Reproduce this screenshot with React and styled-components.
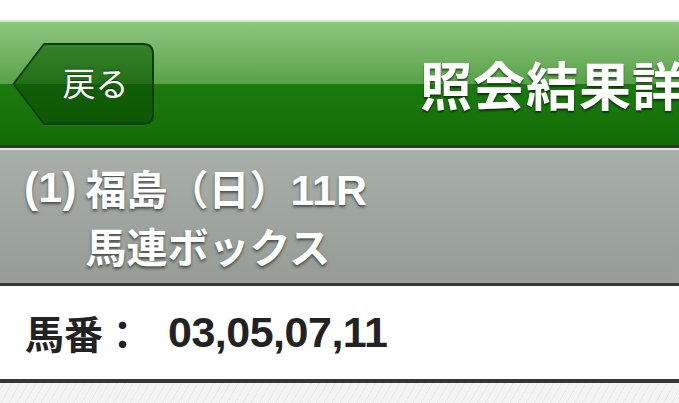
import React from "react";
import styled, { createGlobalStyle } from "styled-components";

const Global = createGlobalStyle`
  html, body { margin: 0; padding: 0; background: #ffffff; }
  body { font-family: "Liberation Sans", "Noto Sans CJK JP", sans-serif; overflow: hidden; }
`;

const Page = styled.div`
  display: flex;
  flex-direction: column;
  width: 679px;
  height: 403px;
  overflow: hidden;
  background: #ffffff;
`;

const TopGap = styled.div`
  height: 20px;
  flex: none;
`;

const Header = styled.header`
  flex: none;
  height: 123px;
  display: flex;
  align-items: center;
  padding-left: 12px;
  border-top: 2px solid #d2ebc9;
  border-bottom: 3px solid #2a3628;
  background: linear-gradient(
    to bottom,
    #8ec67e 0%,
    #74b464 25%,
    #58a248 50%,
    #1b7a0d 50%,
    #17730a 80%,
    #136c07 100%
  );
  overflow: hidden;
`;

const BackButton = styled.button`
  position: relative;
  flex: none;
  width: 143px;
  height: 84px;
  padding: 0 0 0 24px;
  border: 0;
  background: transparent;
  display: flex;
  align-items: center;
  justify-content: center;
  color: #ffffff;
  font-family: "Noto Sans CJK JP", sans-serif;
  font-size: 33px;
  font-weight: 400;
  text-shadow: 0 -1px 1px rgba(0, 0, 0, 0.45);
  cursor: pointer;
`;

const ButtonShape = styled.svg`
  position: absolute;
  inset: 0;
  width: 100%;
  height: 100%;
`;

const ButtonLabel = styled.span`
  position: relative;
  line-height: 1;
  margin-top: -2px;
`;

const Title = styled.h1`
  margin: 0 0 0 265px;
  white-space: nowrap;
  color: #ffffff;
  font-family: "Noto Sans CJK JP", sans-serif;
  font-size: 52px;
  font-weight: 700;
  letter-spacing: 1px;
  line-height: 1;
  text-shadow: 0 2px 2px rgba(0, 0, 0, 0.55);
`;

const RaceBar = styled.section`
  flex: none;
  height: 123px;
  padding: 10px 0 0 24px;
  display: grid;
  grid-template-columns: auto 1fr;
  column-gap: 9px;
  align-content: start;
  border-top: 2px solid #e2e6e2;
  border-bottom: 3px solid #333833;
  background: linear-gradient(to bottom, #a9afa9 0%, #9ea59e 50%, #959d95 100%);
  color: #ffffff;
  font-size: 43px;
  font-weight: 700;
  line-height: 55px;
  text-shadow: 0 2px 3px rgba(0, 0, 0, 0.55);
`;

const RaceNo = styled.div``;

const RaceLines = styled.div`
  display: flex;
  flex-direction: column;
  font-family: "Noto Sans CJK JP", sans-serif;
  font-size: 41px;
`;

const Latin = styled.span`
  font-family: "Liberation Sans", sans-serif;
  font-size: 43px;
`;

const InfoRow = styled.div`
  flex: none;
  height: 93px;
  display: flex;
  align-items: center;
  padding-left: 25px;
  border-bottom: 4px solid #363636;
  background: #ffffff;
  color: #222222;
  font-weight: 700;
`;

const InfoLabel = styled.span`
  font-family: "Noto Sans CJK JP", sans-serif;
  font-size: 39px;
  line-height: 1;
`;

const InfoValue = styled.span`
  margin-left: 26px;
  font-family: "Liberation Sans", sans-serif;
  font-size: 43px;
  line-height: 1;
  letter-spacing: -0.5px;
`;

const Stripes = styled.div`
  flex: 1;
  background: repeating-linear-gradient(
    -60deg,
    #f3f3f3 0px,
    #f3f3f3 6px,
    #e8e8e8 6px,
    #e8e8e8 7px
  );
`;

function ButtonBackground() {
  return (
    <ButtonShape viewBox="0 0 143 84" preserveAspectRatio="none" aria-hidden="true">
      <defs>
        <linearGradient id="btnFill" x1="0" y1="0" x2="0" y2="1">
          <stop offset="0" stopColor="#35832a" />
          <stop offset="0.5" stopColor="#226f18" />
          <stop offset="0.5" stopColor="#115f08" />
          <stop offset="1" stopColor="#0d5705" />
        </linearGradient>
      </defs>
      <path
        d="M1.5 42 L32 2 H131 Q141 2 141 12 V72 Q141 82 131 82 H32 Z"
        fill="#3f9233"
        transform="translate(0 1.2)"
      />
      <path
        d="M1.5 42 L32 2 H131 Q141 2 141 12 V72 Q141 82 131 82 H32 Z"
        fill="url(#btnFill)"
        stroke="#0a3d04"
        strokeWidth="2"
        strokeLinejoin="round"
      />
    </ButtonShape>
  );
}

export default function App() {
  return (
    <>
      <Global />
      <Page>
        <TopGap />
        <Header>
          <BackButton type="button">
            <ButtonBackground />
            <ButtonLabel>戻る</ButtonLabel>
          </BackButton>
          <Title>照会結果詳細</Title>
        </Header>
        <RaceBar>
          <RaceNo>(1)</RaceNo>
          <RaceLines>
            <div>
              福島（日）<Latin>11R</Latin>
            </div>
            <div>馬連ボックス</div>
          </RaceLines>
        </RaceBar>
        <InfoRow>
          <InfoLabel>馬番：</InfoLabel>
          <InfoValue>03,05,07,11</InfoValue>
        </InfoRow>
        <Stripes />
      </Page>
    </>
  );
}
